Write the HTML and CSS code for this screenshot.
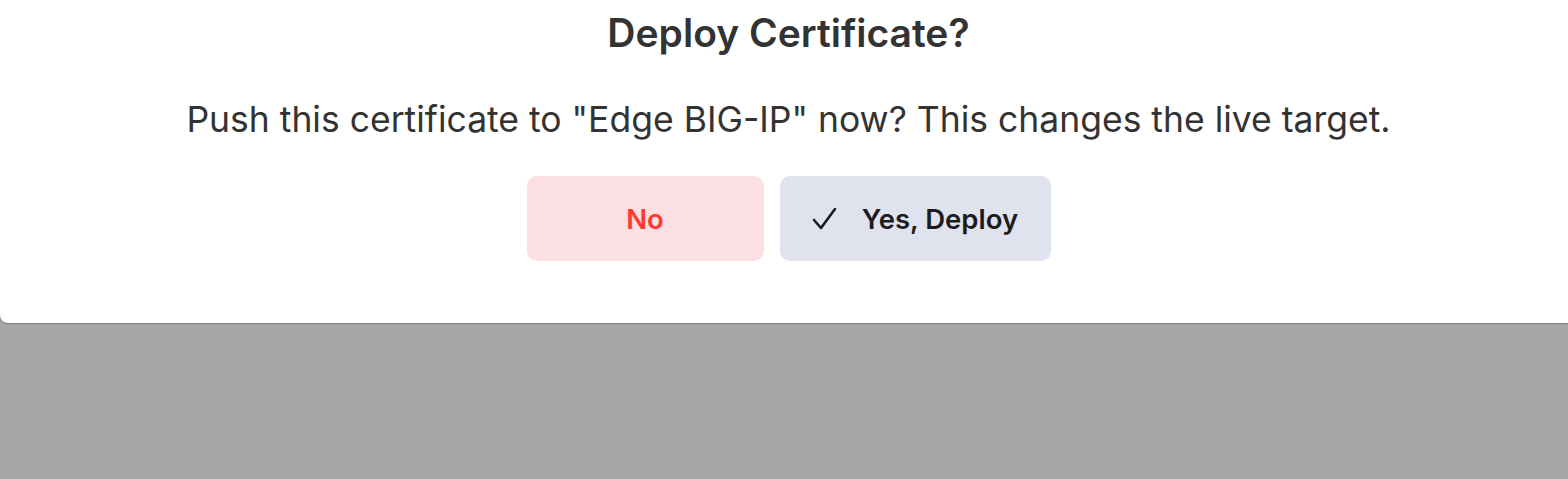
FILE: index.html
```html
<!DOCTYPE html>
<html>
<head>
    <title>Deploy Certificate</title>
    <meta charset="utf-8"/>
    <link rel="stylesheet" href="styles.css">
</head>
<body>
    <div class="dialog">
        <div class="dialog-title">Deploy Certificate?</div>
        <div class="dialog-text">Push this certificate to "Edge BIG-IP" now? This changes the live target.</div>
        <div class="dialog-buttons">
            <button class="btn btn-no">No</button>
            <button class="btn btn-yes">
                <svg class="btn-icon" width="26" height="24" viewBox="0 0 26 24">
                    <path d="M2 13 L9 21 L23 2" fill="none" stroke="#1c1c1e" stroke-width="2.6" stroke-linecap="round" stroke-linejoin="round"/>
                </svg>
                <span>Yes, Deploy</span>
            </button>
        </div>
    </div>
</body>
</html>
```

FILE: styles.css
```css
html {
    height: 100%;
}

body {
    height: 100%;
    margin: 0;
    padding: 0;
    overflow: hidden;
    background: #a6a6a6;
    font-family: Inter, 'Noto Sans', sans-serif;
    color: #333333;
}

.dialog {
    background: #ffffff;
    height: 323px;
    border-radius: 0 0 0 8px;
    box-shadow: 0 1px 1px rgba(0, 0, 0, 0.25);
    display: flex;
    flex-direction: column;
    align-items: center;
    padding: 10px 0 0 9px;
    box-sizing: border-box;
}

.dialog-title {
    font-size: 39px;
    font-weight: 600;
    line-height: 46px;
}

.dialog-text {
    font-size: 35.5px;
    line-height: 44px;
    margin-top: 42px;
}

.dialog-buttons {
    display: flex;
    gap: 16px;
    margin-top: 34px;
}

.btn {
    height: 85px;
    border: none;
    border-radius: 10px;
    font-family: inherit;
    font-size: 27.5px;
    font-weight: 600;
    display: flex;
    align-items: center;
    justify-content: center;
    gap: 24px;
}

.btn-no {
    width: 237px;
    background: #fbdfe3;
    color: #ff3b30;
}

.btn-yes {
    width: 271px;
    background: #e0e3ed;
    color: #1c1c1e;
}
```
